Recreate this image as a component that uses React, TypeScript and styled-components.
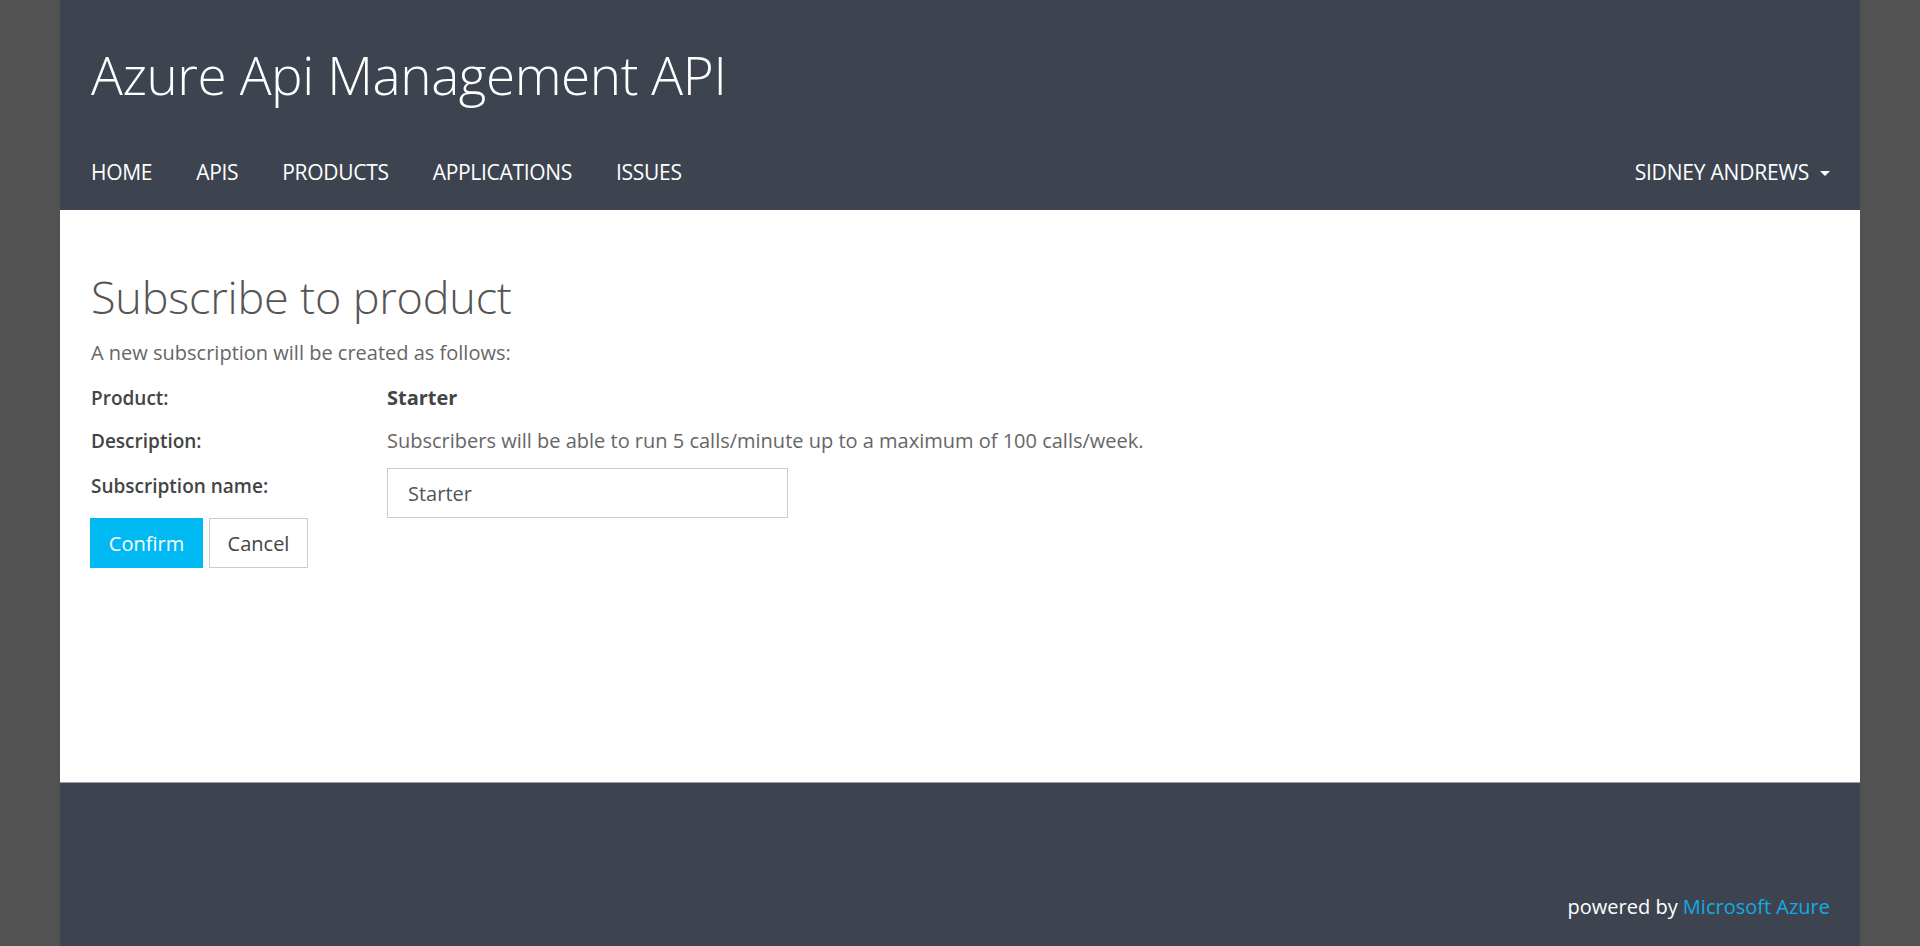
import React from "react";
import styled, { createGlobalStyle } from "styled-components";

const GlobalStyle = createGlobalStyle`
  html, body {
    margin: 0;
    padding: 0;
    background: #525252;
  }
  body {
    font-family: "Open Sans", "Liberation Sans", sans-serif;
  }
  * { box-sizing: border-box; }
`;

const Page = styled.div`
  width: 1800px;
  margin: 0 auto;
  display: flex;
  flex-direction: column;
  min-height: 946px;
`;

const Header = styled.header`
  background: #3d4450;
  height: 210px;
  padding: 40px 30px 0 31px;
  display: flex;
  flex-direction: column;
`;

const Brand = styled.h1`
  margin: 0;
  font-size: 53px;
  line-height: 70px;
  font-weight: 300;
  color: #ffffff;
  letter-spacing: -0.4px;
`;

const NavBar = styled.nav`
  margin-top: 48px;
  display: flex;
  align-items: center;
  justify-content: space-between;
`;

const NavList = styled.ul`
  list-style: none;
  margin: 0;
  padding: 0;
  display: flex;
  gap: 44px;
`;

const NavLink = styled.a`
  color: #ffffff;
  text-decoration: none;
  font-size: 21px;
  line-height: 28px;
  text-transform: uppercase;
  letter-spacing: -0.3px;
`;

const UserMenu = styled.a`
  display: flex;
  align-items: center;
  color: #ffffff;
  text-decoration: none;
  font-size: 21px;
  line-height: 28px;
  letter-spacing: -0.2px;
`;

const Caret = styled.span`
  display: inline-block;
  width: 0;
  height: 0;
  margin-left: 11px;
  margin-top: 2px;
  border-top: 5px solid #ffffff;
  border-left: 5px solid transparent;
  border-right: 5px solid transparent;
`;

const Main = styled.main`
  background: #ffffff;
  height: 572px;
  padding: 59px 30px 0 30px;
  display: flex;
  flex-direction: column;
`;

const PageTitle = styled.h2`
  margin: 0 0 0 1px;
  font-size: 45px;
  line-height: 56px;
  font-weight: 300;
  color: #555555;
  letter-spacing: -0.2px;
`;

const Lead = styled.p`
  margin: 16px 0 0 1px;
  font-size: 20px;
  line-height: 24px;
  color: #666666;
`;

const Details = styled.div`
  margin-top: 21px;
  display: flex;
  flex-direction: column;
`;

const Row = styled.div<{ $h: number }>`
  display: grid;
  grid-template-columns: 296px auto;
  align-items: start;
  height: ${(p) => p.$h}px;
  margin-left: 1px;
`;

const Label = styled.div<{ $offset?: number }>`
  font-size: 19px;
  line-height: 24px;
  font-weight: 600;
  color: #444444;
  padding-top: ${(p) => p.$offset ?? 0}px;
`;

const Value = styled.div<{ $strong?: boolean }>`
  font-size: 20px;
  line-height: 24px;
  font-weight: ${(p) => (p.$strong ? 700 : 400)};
  color: ${(p) => (p.$strong ? "#444444" : "#666666")};
`;

const TextInput = styled.input`
  width: 401px;
  height: 50px;
  border: 1px solid #cccccc;
  padding: 0 20px;
  font-family: "Open Sans", "Liberation Sans", sans-serif;
  font-size: 20px;
  color: #555555;
  outline: none;
  background: #ffffff;
`;

const Actions = styled.div`
  display: flex;
  gap: 6px;
`;

const Button = styled.button<{ $primary?: boolean; $w: number }>`
  width: ${(p) => p.$w}px;
  height: 50px;
  padding: 0;
  font-family: "Open Sans", "Liberation Sans", sans-serif;
  font-size: 20px;
  cursor: pointer;
  border: 1px solid ${(p) => (p.$primary ? "#00b9f2" : "#cccccc")};
  background: ${(p) => (p.$primary ? "#00b9f2" : "#ffffff")};
  color: ${(p) => (p.$primary ? "#ffffff" : "#444444")};
`;

const Footer = styled.footer`
  background: #3d4450;
  height: 164px;
  border-top: 1px solid #9aa0a8;
  padding: 112px 30px 0 30px;
  display: flex;
  justify-content: flex-end;
`;

const Powered = styled.div`
  font-size: 20px;
  line-height: 24px;
  color: #ffffff;
`;

const AzureLink = styled.a`
  color: #15a9e6;
  text-decoration: none;
`;

export default function App() {
  return (
    <>
      <GlobalStyle />
      <Page>
        <Header>
          <Brand>Azure Api Management API</Brand>
          <NavBar>
            <NavList>
              <li><NavLink href="#">Home</NavLink></li>
              <li><NavLink href="#">APIs</NavLink></li>
              <li><NavLink href="#">Products</NavLink></li>
              <li><NavLink href="#">Applications</NavLink></li>
              <li><NavLink href="#">Issues</NavLink></li>
            </NavList>
            <UserMenu href="#">
              SIDNEY ANDREWS
              <Caret />
            </UserMenu>
          </NavBar>
        </Header>
        <Main>
          <PageTitle>Subscribe to product</PageTitle>
          <Lead>A new subscription will be created as follows:</Lead>
          <Details>
            <Row $h={43}>
              <Label>Product:</Label>
              <Value $strong>Starter</Value>
            </Row>
            <Row $h={39}>
              <Label>Description:</Label>
              <Value>Subscribers will be able to run 5 calls/minute up to a maximum of 100 calls/week.</Value>
            </Row>
            <Row $h={50}>
              <Label $offset={6}>Subscription name:</Label>
              <TextInput defaultValue="Starter" />
            </Row>
          </Details>
          <Actions>
            <Button $primary $w={113}>Confirm</Button>
            <Button $w={99}>Cancel</Button>
          </Actions>
        </Main>
        <Footer>
          <Powered>
            powered by <AzureLink href="#">Microsoft Azure</AzureLink>
          </Powered>
        </Footer>
      </Page>
    </>
  );
}
